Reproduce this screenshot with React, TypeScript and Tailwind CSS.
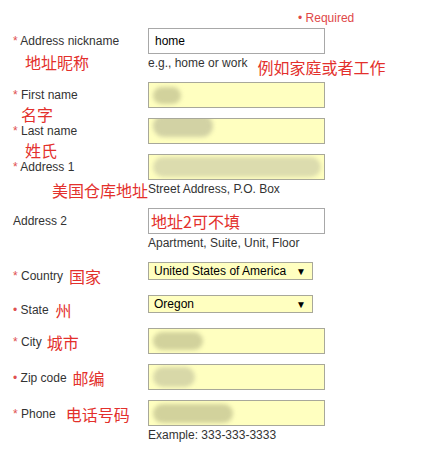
const label = "text-[12px] leading-[14px] text-[#333333]"
const cn = "font-['Noto_Sans_CJK_SC',sans-serif] text-[16px] leading-[16px] text-[#e3302c]"
const star = "text-[#e05050]"
const inputBox = "h-[26px] w-[177px] border border-[#a8a89a] bg-[#ffffc0] flex items-center pl-[4px] overflow-hidden"

function Blob({ w, h, tone = "bg-[#d2d29c]" }: { w: number; h: number; tone?: string }) {
  return (
    <span
      className={`block rounded-full blur-[2px] ${tone}`}
      style={{ width: w, height: h }}
    />
  )
}

function Label({ text, mark = "*" }: { text: string; mark?: string }) {
  return (
    <span className={label}>
      <span className={star}>{mark}</span> {text}
    </span>
  )
}

export default function App() {
  return (
    <div className="font-['Liberation_Sans',Arial,sans-serif] bg-white w-[447px] h-[465px] pl-[13px]">
      <div className="h-[28px] pl-[285px] pt-[11px] text-[12px] leading-[14px] text-[#e04848]">
        • Required
      </div>

      {/* nickname */}
      <div className="flex h-[54px]">
        <div className="w-[135px]">
          <div className="h-[26px] flex items-center">
            <Label text="Address nickname" />
          </div>
          <div className={`${cn} pl-[12px]`}>地址昵称</div>
        </div>
        <div>
          <div className="h-[26px] w-[177px] border border-[#a8a8a8] bg-white flex items-center pl-[6px] text-[12px] text-black">
            home
          </div>
          <div className="flex gap-[10px]">
            <span className={`${label} pt-[2px]`}>e.g., home or work</span>
            <span className={`${cn} mt-[5px]`}>例如家庭或者工作</span>
          </div>
        </div>
      </div>

      {/* first name */}
      <div className="flex h-[36px]">
        <div className="w-[135px]">
          <div className="h-[24px] flex items-center mt-[1px]">
            <span className="text-[12px] leading-[12px] text-[#333333]">
              <span className={star}>*</span> First name
            </span>
          </div>
          <div className={`${cn} pl-[8px] -mt-[1px]`}>名字</div>
        </div>
        <div className={inputBox}>
          <Blob w={28} h={17} />
        </div>
      </div>

      {/* last name */}
      <div className="flex h-[36px]">
        <div className="w-[135px]">
          <div className="h-[26px] flex items-center">
            <Label text="Last name" />
          </div>
          <div className={`${cn} pl-[12px] -mt-[2px]`}>姓氏</div>
        </div>
        <div className={`${inputBox} items-start`}>
          <span className="flex items-center -mt-[4px]">
            <Blob w={60} h={22} tone="bg-[#d2d2a4]" />
          </span>
        </div>
      </div>

      {/* address 1 */}
      <div className="flex h-[54px]">
        <div className="w-[135px]">
          <div className="h-[26px] flex items-center">
            <Label text="Address 1" />
          </div>
          <div className={`${cn} text-right mt-[2px]`}>美国仓库地址</div>
        </div>
        <div>
          <div className={inputBox}>
            <Blob w={168} h={20} tone="bg-[#dcdcae]" />
          </div>
          <div className={`${label} mt-[2px]`}>Street Address, P.O. Box</div>
        </div>
      </div>

      {/* address 2 */}
      <div className="flex h-[54px]">
        <div className="w-[135px] h-[26px] flex items-center">
          <span className={label}>Address 2</span>
        </div>
        <div>
          <div className="h-[26px] w-[177px] border border-[#a8a8a8] bg-white flex items-center pl-[2px]">
            <span className={cn}>地址2可不填</span>
          </div>
          <div className={`${label} mt-[2px]`}>Apartment, Suite, Unit, Floor</div>
        </div>
      </div>

      {/* country */}
      <div className="flex h-[33px]">
        <div className="w-[135px] h-[28px] flex items-center gap-[6px]">
          <Label text="Country" />
          <span className={cn}>国家</span>
        </div>
        <div className="h-[18px] w-[165px] border border-[#a8a89a] bg-[#ffffc0] flex items-center justify-between pl-[5px] pr-[6px] text-[12px] text-black">
          <span>United States of America</span>
          <span className="text-[10px]">▼</span>
        </div>
      </div>

      {/* state */}
      <div className="flex h-[33px]">
        <div className="w-[135px] h-[30px] flex items-center gap-[7px]">
          <Label text="State" mark="•" />
          <span className={cn}>州</span>
        </div>
        <div className="h-[18px] w-[165px] border border-[#a8a89a] bg-[#ffffc0] flex items-center justify-between pl-[5px] pr-[6px] text-[12px] text-black">
          <span>Oregon</span>
          <span className="text-[10px]">▼</span>
        </div>
      </div>

      {/* city */}
      <div className="flex h-[36px]">
        <div className="w-[135px] h-[27px] flex items-center gap-[5px]">
          <Label text="City" />
          <span className={cn}>城市</span>
        </div>
        <div className={inputBox}>
          <Blob w={50} h={18} />
        </div>
      </div>

      {/* zip */}
      <div className="flex h-[36px]">
        <div className="w-[135px] h-[27px] flex items-center gap-[6px]">
          <Label text="Zip code" mark="•" />
          <span className={cn}>邮编</span>
        </div>
        <div className={inputBox}>
          <Blob w={42} h={20} tone="bg-[#d8d8a8]" />
        </div>
      </div>

      {/* phone */}
      <div className="flex">
        <div className="w-[135px] h-[27px] flex items-center gap-[10px]">
          <Label text="Phone" />
          <span className={cn}>电话号码</span>
        </div>
        <div>
          <div className={inputBox}>
            <Blob w={80} h={19} />
          </div>
          <div className={`${label} mt-[2px]`}>Example: 333-333-3333</div>
        </div>
      </div>
    </div>
  )
}
